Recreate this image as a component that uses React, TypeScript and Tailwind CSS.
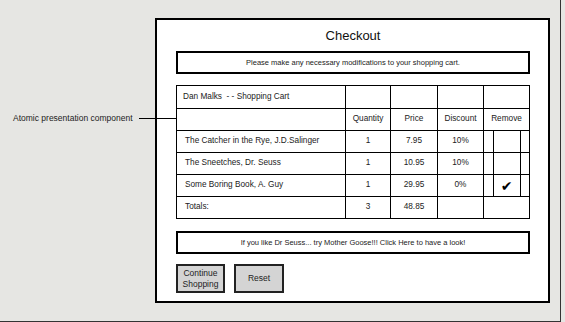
import React from "react";

interface CartItem {
  title: string;
  qty: string;
  price: string;
  discount: string;
  remove: boolean;
}

const items: CartItem[] = [
  { title: "The Catcher in the Rye, J.D.Salinger", qty: "1", price: "7.95", discount: "10%", remove: false },
  { title: "The Sneetches, Dr. Seuss", qty: "1", price: "10.95", discount: "10%", remove: false },
  { title: "Some Boring Book, A. Guy", qty: "1", price: "29.95", discount: "0%", remove: true },
];

const cell = "border-r border-b border-black flex items-center";

const App = () => {
  return (
    <div className="relative w-[565px] h-[322px] bg-[#e6e6e3] font-['Liberation_Sans',Arial,sans-serif] text-[#222]">
      <div className="w-[561px] h-[322px] border-r border-b border-[#333] pt-[18px] pl-[155px]">
        {/* Checkout panel */}
        <div className="w-[395px] h-[285px] border-2 border-black bg-white pl-[19px] pr-[18px] flex flex-col">
          <div className="h-[31px] flex items-center justify-center text-[13px] text-[#111]">Checkout</div>

          <div className="h-[23px] border-2 border-black flex items-center justify-center text-[7.5px]">
            Please make any necessary modifications to your shopping cart.
          </div>

          {/* Cart table */}
          <div className="mt-[11px] grid grid-cols-[169px_45px_47px_46px_46px] border-l border-t border-black text-[8.25px]">
            <div className={`${cell} h-[23px] pl-[6px]`}>Dan Malks&nbsp; - - Shopping Cart</div>
            <div className={`${cell} h-[23px]`} />
            <div className={`${cell} h-[23px]`} />
            <div className={`${cell} h-[23px]`} />
            <div className={`${cell} h-[23px]`} />

            <div className={`${cell} h-[22px]`} />
            <div className={`${cell} h-[22px] justify-center`}>Quantity</div>
            <div className={`${cell} h-[22px] justify-center`}>Price</div>
            <div className={`${cell} h-[22px] justify-center`}>Discount</div>
            <div className={`${cell} h-[22px] justify-center`}>Remove</div>

            {items.map((item) => (
              <React.Fragment key={item.title}>
                <div className={`${cell} h-[22px] pl-2`}>{item.title}</div>
                <div className={`${cell} h-[22px] justify-center`}>{item.qty}</div>
                <div className={`${cell} h-[22px] justify-center`}>{item.price}</div>
                <div className={`${cell} h-[22px] justify-center`}>{item.discount}</div>
                <div className={`${cell} h-[22px] justify-center items-stretch`}>
                  <div className="w-[28px] border-x border-black flex items-center justify-center font-['DejaVu_Sans',sans-serif] text-[14px] text-black leading-none">
                    {item.remove ? "✔" : ""}
                  </div>
                </div>
              </React.Fragment>
            ))}

            <div className={`${cell} h-[22px] pl-2`}>Totals:</div>
            <div className={`${cell} h-[22px] justify-center`}>3</div>
            <div className={`${cell} h-[22px] justify-center`}>48.85</div>
            <div className={`${cell} h-[22px]`} />
            <div className={`${cell} h-[22px]`} />
          </div>

          <div className="mt-[12px] h-[23px] border-2 border-black flex items-center justify-center text-[7.5px]">
            If you like Dr Seuss... try Mother Goose!!! Click Here to have a look!
          </div>

          <div className="mt-[10px] flex gap-[9px]">
            <button className="w-[49px] h-[29px] border-2 border-[#222] bg-[#d4d4d4] text-[8.5px] leading-[11px] text-center">
              Continue
              <br />
              Shopping
            </button>
            <button className="w-[50px] h-[29px] border-2 border-[#222] bg-[#d4d4d4] text-[8.5px] text-center">
              Reset
            </button>
          </div>
        </div>
      </div>

      {/* Callout annotation */}
      <div className="absolute left-[13px] top-[113px] flex items-center h-[11px]">
        <span className="text-[8.5px] whitespace-nowrap">Atomic presentation component</span>
        <span className="ml-[6px] w-[37px] h-px bg-black" />
      </div>
    </div>
  );
};

export default App;
